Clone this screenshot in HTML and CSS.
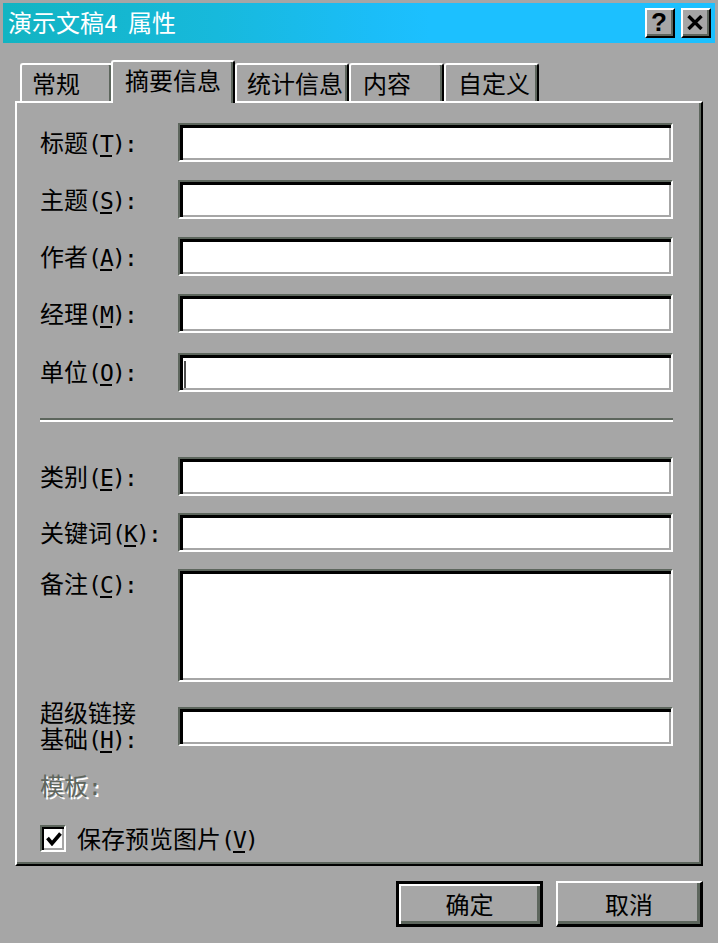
FILE: index.html
```html
<!DOCTYPE html>
<html lang="zh-CN">
<head>
<meta charset="utf-8">
<title>演示文稿4 属性</title>
<link rel="stylesheet" href="styles.css">
</head>
<body>
<div class="window">
  <div class="titlebar">
    <span class="title">演示文稿<span class="half">4 </span>属性</span>
    <div class="tb-buttons">
      <div class="tb-btn tb-help">?</div>
      <div class="tb-btn tb-close">
        <svg width="16" height="15" viewBox="0 0 16 15"><path d="M1.5 1 L14.5 14 M14.5 1 L1.5 14" stroke="#000" stroke-width="3.4" fill="none"/></svg>
      </div>
    </div>
  </div>
  <div class="main">
    <div class="tabs">
      <div class="tab t-general">常规</div>
      <div class="tab tab-active t-summary">摘要信息</div>
      <div class="tab t-stats">统计信息</div>
      <div class="tab t-content">内容</div>
      <div class="tab t-custom">自定义</div>
    </div>
    <div class="sheet">
      <div class="form form-a">
        <div class="label">标题<span class="half">(<u>T</u>):</span></div>
        <div class="field"></div>
        <div class="label">主题<span class="half">(<u>S</u>):</span></div>
        <div class="field"></div>
        <div class="label">作者<span class="half">(<u>A</u>):</span></div>
        <div class="field"></div>
        <div class="label">经理<span class="half">(<u>M</u>):</span></div>
        <div class="field"></div>
        <div class="label">单位<span class="half">(<u>O</u>):</span></div>
        <div class="field field-gap"><span class="caret"></span></div>
      </div>
      <div class="separator"></div>
      <div class="form form-b">
        <div class="label">类别<span class="half">(<u>E</u>):</span></div>
        <div class="field"></div>
        <div class="label">关键词<span class="half">(<u>K</u>):</span></div>
        <div class="field"></div>
        <div class="label label-top">备注<span class="half">(<u>C</u>):</span></div>
        <div class="field field-tall"></div>
        <div class="label label-wrap">超级链接<br>基础<span class="half">(<u>H</u>):</span></div>
        <div class="field"></div>
      </div>
      <div class="disabled">模板<span class="half">:</span></div>
      <div class="check-row">
        <div class="checkbox">
          <svg width="16" height="14" viewBox="0 0 16 14"><path d="M1.5 6 L6 11.5 L14.5 1.5" stroke="#000" stroke-width="3.6" fill="none"/></svg>
        </div>
        <span class="check-label">保存预览图片<span class="half">(<u>V</u>)</span></span>
      </div>
    </div>
    <div class="actions">
      <button class="btn btn-default">确定</button>
      <button class="btn">取消</button>
    </div>
  </div>
</div>
</body>
</html>
```
FILE: styles.css
```css
html, body {
  margin: 0;
  padding: 0;
  background: #a6a6a6;
}

body {
  font-family: "Noto Sans CJK SC", "Noto Sans", sans-serif;
  font-size: 24px;
  color: #000;
}

.window {
  width: 718px;
  height: 943px;
  box-sizing: border-box;
  border: 3px solid #a6a6a6;
  background: #a6a6a6;
}

.half {
  font-family: "DejaVu Sans Mono", "Liberation Mono", monospace;
  font-size: 23px;
  letter-spacing: -1.85px;
}

.half u {
  text-underline-offset: 3px;
}

/* title bar */
.titlebar {
  height: 40px;
  display: flex;
  align-items: center;
  justify-content: space-between;
  padding: 0 4px 0 5px;
  background: linear-gradient(90deg, #12b4c2 0%, #17b9dc 30%, #1bbdf8 52%, #1cc0ff 60%, #1cc0ff 100%);
  color: #fff;
}

.title {
  font-size: 24px;
  line-height: 28px;
  white-space: nowrap;
}

.tb-buttons {
  display: flex;
  gap: 6px;
}

.tb-btn {
  width: 30px;
  height: 30px;
  box-sizing: border-box;
  background: #a6a6a6;
  border-top: 2px solid #fff;
  border-left: 2px solid #fff;
  border-right: 2px solid #000;
  border-bottom: 2px solid #000;
  box-shadow: inset -2px -2px 0 #5d665d;
  display: flex;
  align-items: center;
  justify-content: center;
  color: #000;
}

.tb-help {
  font-family: "Liberation Sans", Arial, sans-serif;
  font-weight: bold;
  font-size: 26px;
  line-height: 1;
  padding: 0 2px 2px 0;
}

.tb-close {
  padding: 0 2px 2px 0;
}

/* main area */
.main {
  padding: 0 12px;
}

.tabs {
  display: flex;
  align-items: flex-end;
  height: 41px;
  margin-top: 17px;
  padding-left: 5px;
}

.tab {
  height: 38px;
  box-sizing: border-box;
  border-top: 2px solid #fff;
  border-left: 2px solid #fff;
  border-right: 2px solid #000;
  border-radius: 3px 3px 0 0;
  box-shadow: inset -2px 0 0 #5d665d;
  padding: 0 0 0 10px;
  display: flex;
  align-items: center;
  line-height: 1;
  white-space: nowrap;
  background: #a6a6a6;
}

.t-general { width: 93px; }
.t-summary { width: 124px; }
.t-stats { width: 114px; padding-left: 10px; }
.t-content { width: 95px; padding-left: 12px; }
.t-custom { width: 95px; padding-left: 12px; }

.tab-active {
  height: 43px;
  margin-left: -2px;
  margin-bottom: -2px;
  padding-left: 12px;
  padding-bottom: 6px;
  position: relative;
  z-index: 1;
}

.sheet {
  height: 765px;
  box-sizing: border-box;
  border-top: 2px solid #fff;
  border-left: 2px solid #fff;
  border-right: 2px solid #000;
  border-bottom: 2px solid #000;
  box-shadow: inset -2px -2px 0 #5d665d;
  padding: 20px 28px 0 23px;
}

.form {
  display: grid;
  grid-template-columns: 138px 1fr;
  align-items: center;
}

.form-a {
  row-gap: 18px;
}

.form-b {
  row-gap: 17px;
  margin-top: 35px;
}

.label {
  font-size: 24px;
  line-height: 28px;
  white-space: nowrap;
}

.label-top {
  align-self: start;
}

.label-wrap {
  line-height: 26px;
}

.field {
  height: 39px;
  box-sizing: border-box;
  background: #fff;
  border-top: 2px solid #5d665d;
  border-left: 2px solid #5d665d;
  border-right: 2px solid #fff;
  border-bottom: 2px solid #fff;
  box-shadow: inset 3px 3px 0 #000, inset -2px -2px 0 #a6a6a6;
  display: flex;
  align-items: center;
  padding-left: 4px;
}

.field-gap {
  margin-top: 2px;
}

.field-tall {
  height: 113px;
}

.caret {
  width: 2px;
  height: 27px;
  margin-top: 3px;
  background: #4d4d4d;
}

.separator {
  margin-top: 26px;
  border-top: 2px solid #5d665d;
  border-bottom: 2px solid #fff;
}

.disabled {
  margin-top: 18px;
  font-size: 24px;
  line-height: 28px;
  color: #5f665e;
  text-shadow: 2px 2px 0 #fff;
}

.check-row {
  margin-top: 24px;
  display: flex;
  align-items: center;
  gap: 11px;
  height: 27px;
}

.checkbox {
  width: 26px;
  height: 27px;
  box-sizing: border-box;
  background: #fff;
  border-top: 2px solid #5d665d;
  border-left: 2px solid #5d665d;
  border-right: 2px solid #fff;
  border-bottom: 2px solid #fff;
  box-shadow: inset 2px 2px 0 #000, inset -2px -2px 0 #a6a6a6;
  display: flex;
  align-items: center;
  justify-content: center;
  padding: 1px 0 0 1px;
}

.check-label {
  font-size: 24px;
  line-height: 28px;
  white-space: nowrap;
}

/* buttons */
.actions {
  display: flex;
  justify-content: flex-end;
  gap: 13px;
  margin-top: 15px;
}

.btn {
  width: 147px;
  height: 46px;
  box-sizing: border-box;
  padding: 0;
  font-family: inherit;
  font-size: 24px;
  line-height: 1;
  color: #000;
  background: #a6a6a6;
  border-top: 2px solid #fff;
  border-left: 2px solid #fff;
  border-right: 3px solid #000;
  border-bottom: 3px solid #000;
  box-shadow: inset -3px -3px 0 #5d665d;
}

.btn-default {
  border: 3px solid #000;
  box-shadow: inset 2px 2px 0 #fff, inset -3px -3px 0 #5d665d;
}
```
